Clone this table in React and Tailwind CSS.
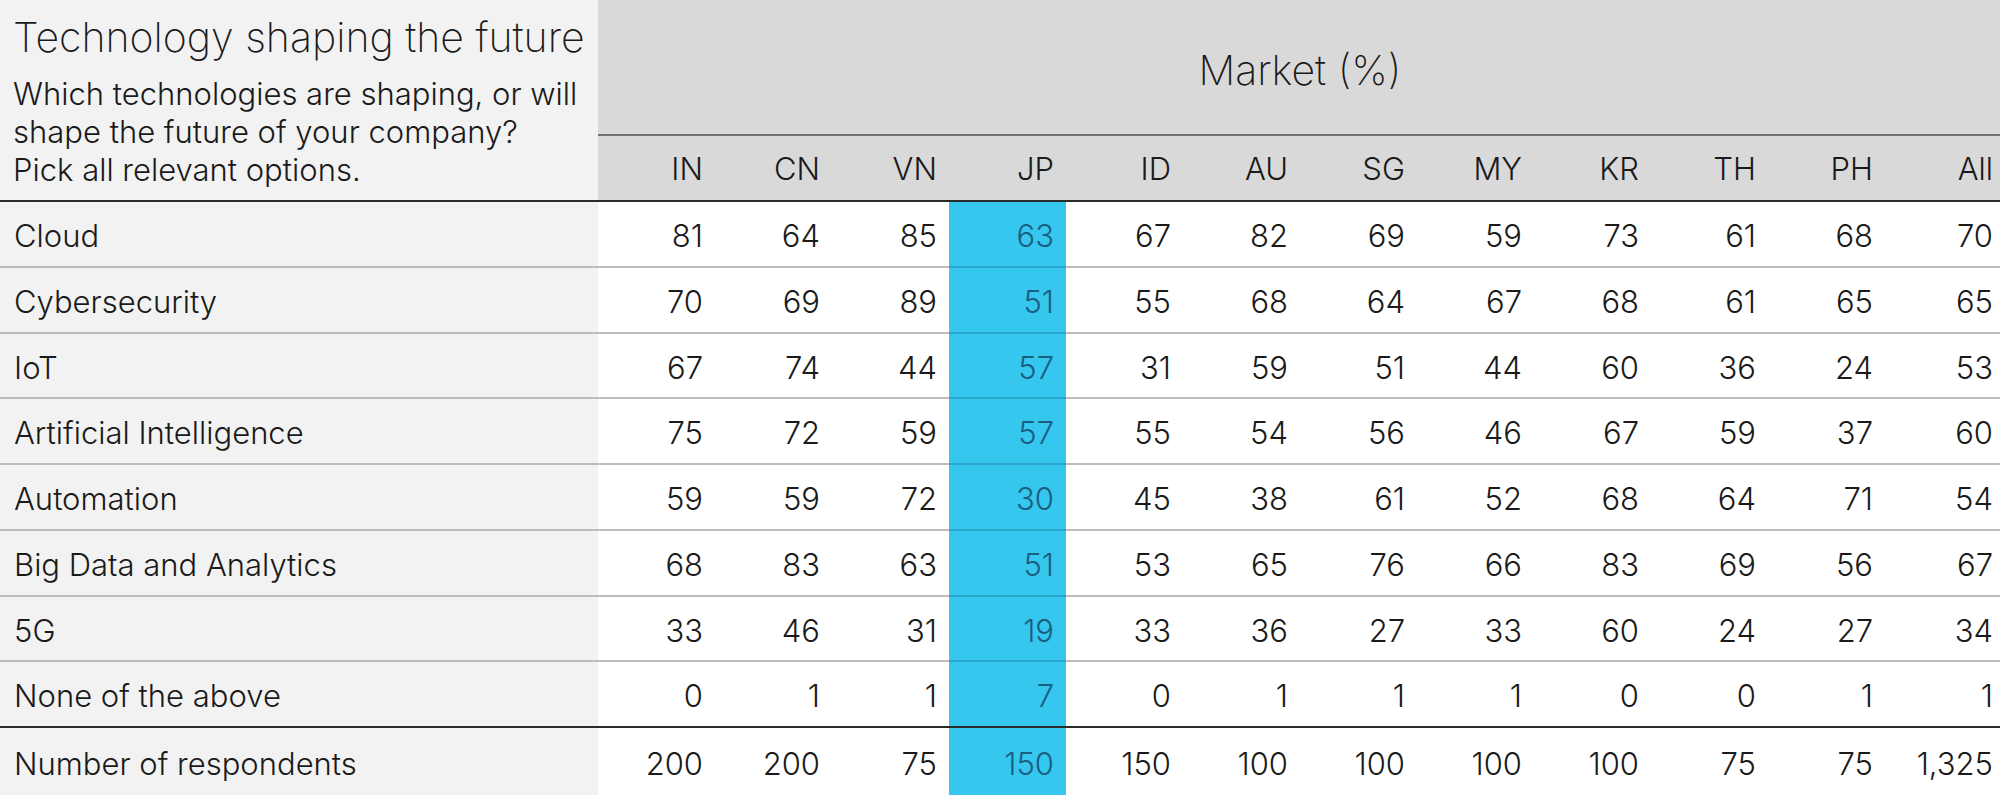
import React from "react";

const cols = ["IN", "CN", "VN", "JP", "ID", "AU", "SG", "MY", "KR", "TH", "PH", "All"];

const rows = [
  ["Cloud", ["81", "64", "85", "63", "67", "82", "69", "59", "73", "61", "68", "70"]],
  ["Cybersecurity", ["70", "69", "89", "51", "55", "68", "64", "67", "68", "61", "65", "65"]],
  ["IoT", ["67", "74", "44", "57", "31", "59", "51", "44", "60", "36", "24", "53"]],
  ["Artificial Intelligence", ["75", "72", "59", "57", "55", "54", "56", "46", "67", "59", "37", "60"]],
  ["Automation", ["59", "59", "72", "30", "45", "38", "61", "52", "68", "64", "71", "54"]],
  ["Big Data and Analytics", ["68", "83", "63", "51", "53", "65", "76", "66", "83", "69", "56", "67"]],
  ["5G", ["33", "46", "31", "19", "33", "36", "27", "33", "60", "24", "27", "34"]],
  ["None of the above", ["0", "1", "1", "7", "0", "1", "1", "1", "0", "0", "1", "1"]],
];

const total = ["200", "200", "75", "150", "150", "100", "100", "100", "100", "75", "75", "1,325"];

function DataRow({ label, values, last, dark }) {
  const border = last ? "" : dark ? "border-b-2 border-[#2b2b2b]" : "border-b-2 border-[#bdbdbd]";
  const jpBorder = last ? "" : dark ? "border-b-2 border-[#2b2b2b]" : "border-b-2 border-[#2aa6c8]";
  return (
    <div className={`grid grid-cols-[598px_repeat(12,117px)] ${last ? "h-[67px]" : "h-[65.75px]"}`}>
      <div className={`bg-[#f2f2f2] flex items-center pl-[14px] pt-[5px] ${border}`}>{label}</div>
      {values.map((v, i) => (
        <div
          key={i}
          className={`flex items-center justify-end pt-[5px] ${i === 11 ? "pr-[9px]" : "pr-[12px]"} ${
            i === 3 ? `bg-[#35c7ed] text-[#1b5e82] ${jpBorder}` : `bg-white ${border}`
          }`}
        >
          {v}
        </div>
      ))}
    </div>
  );
}

export default function App() {
  return (
    <div className="w-[2000px] h-[795px] overflow-hidden bg-white font-['Inter',sans-serif] font-light text-[#1a1a1a] text-[31px]">
      <div className="w-[2002px]">
        <div className="flex h-[202px] border-b-2 border-[#2b2b2b]">
          <div className="w-[598px] bg-[#f2f2f2] pl-[13px] pt-[13px]">
            <div className="text-[41px] leading-[48px] font-extralight">Technology shaping the future</div>
            <div className="mt-[14px] text-[31px] leading-[38px]">
              Which technologies are shaping, or will
              <br />
              shape the future of your company?
              <br />
              Pick all relevant options.
            </div>
          </div>
          <div className="flex-1 bg-[#d9d9d9] flex flex-col">
            <div className="h-[136px] flex items-center justify-center pt-[8px] text-[41px] font-extralight border-b-2 border-[#707070]">
              Market (%)
            </div>
            <div className="flex-1 grid grid-cols-[repeat(12,117px)]">
              {cols.map((c, i) => (
                <div
                  key={c}
                  className={`flex items-center justify-end pt-[3px] ${i === 11 ? "pr-[9px]" : "pr-[12px]"}`}
                >
                  {c}
                </div>
              ))}
            </div>
          </div>
        </div>
        {rows.map(([label, values], idx) => (
          <DataRow key={label} label={label} values={values} dark={idx === rows.length - 1} />
        ))}
        <DataRow label="Number of respondents" values={total} last />
      </div>
    </div>
  );
}
